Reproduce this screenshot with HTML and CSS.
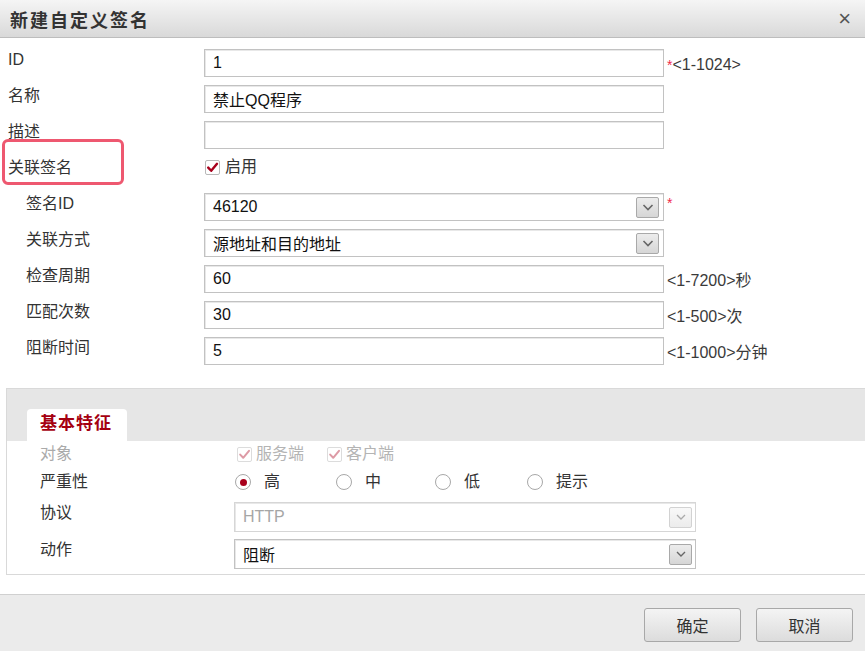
FILE: index.html
```html
<!DOCTYPE html>
<html lang="zh-CN">
<head>
  <meta charset="UTF-8" />
  <title>新建自定义签名</title>
  <link rel="stylesheet" href="styles.css">
</head>
<body>
  <div class="dialog">
    <div class="dialog-header">
      <span class="dialog-title">新建自定义签名</span>
      <span class="dialog-close">×</span>
    </div>

    <div class="form">
      <div class="form-row">
        <label class="form-label">ID</label>
        <input class="text-input" type="text" value="1" />
        <span class="hint"><span class="req">*</span>&lt;1-1024&gt;</span>
      </div>
      <div class="form-row">
        <label class="form-label">名称</label>
        <input class="text-input" type="text" value="禁止QQ程序" />
      </div>
      <div class="form-row">
        <label class="form-label">描述</label>
        <input class="text-input" type="text" value="" />
      </div>
      <div class="form-row">
        <label class="form-label">关联签名</label>
        <span class="check">
          <span class="check-box">
            <svg width="13" height="13" viewBox="0 0 13 13"><path d="M2.2 6.6 L5.2 9.8 L11 2.8" fill="none" stroke="#a8001c" stroke-width="2.4" stroke-linecap="round" stroke-linejoin="round"/></svg>
          </span>
          启用
        </span>
        <div class="mark"></div>
      </div>
      <div class="form-row sub">
        <label class="form-label">签名ID</label>
        <div class="select">
          <span class="select-text">46120</span>
          <span class="select-btn">
            <svg width="20" height="18" viewBox="0 0 20 18"><path d="M5.5 7 L10 11.5 L14.5 7" fill="none" stroke="#666" stroke-width="1.6"/></svg>
          </span>
        </div>
        <span class="hint req star">*</span>
      </div>
      <div class="form-row sub">
        <label class="form-label">关联方式</label>
        <div class="select">
          <span class="select-text">源地址和目的地址</span>
          <span class="select-btn">
            <svg width="20" height="18" viewBox="0 0 20 18"><path d="M5.5 7 L10 11.5 L14.5 7" fill="none" stroke="#666" stroke-width="1.6"/></svg>
          </span>
        </div>
      </div>
      <div class="form-row sub">
        <label class="form-label">检查周期</label>
        <input class="text-input" type="text" value="60" />
        <span class="hint">&lt;1-7200&gt;秒</span>
      </div>
      <div class="form-row sub">
        <label class="form-label">匹配次数</label>
        <input class="text-input" type="text" value="30" />
        <span class="hint">&lt;1-500&gt;次</span>
      </div>
      <div class="form-row sub">
        <label class="form-label">阻断时间</label>
        <input class="text-input" type="text" value="5" />
        <span class="hint">&lt;1-1000&gt;分钟</span>
      </div>
    </div>

    <div class="panel">
      <div class="panel-tabs">
        <span class="tab active">基本特征</span>
      </div>
      <div class="panel-body">
        <div class="prow">
          <label class="plabel disabled">对象</label>
          <span class="check disabled">
            <span class="check-box">
              <svg width="13" height="13" viewBox="0 0 13 13"><path d="M2.2 6.6 L5.2 9.8 L11 2.8" fill="none" stroke="#dd9aa5" stroke-width="2" stroke-linecap="round" stroke-linejoin="round"/></svg>
            </span>
            服务端
          </span>
          <span class="check disabled">
            <span class="check-box">
              <svg width="13" height="13" viewBox="0 0 13 13"><path d="M2.2 6.6 L5.2 9.8 L11 2.8" fill="none" stroke="#dd9aa5" stroke-width="2" stroke-linecap="round" stroke-linejoin="round"/></svg>
            </span>
            客户端
          </span>
        </div>
        <div class="prow radios">
          <label class="plabel">严重性</label>
          <div class="radio-group">
            <span class="radio checked"><span class="radio-dot"></span>高</span>
            <span class="radio"><span class="radio-dot"></span>中</span>
            <span class="radio"><span class="radio-dot"></span>低</span>
            <span class="radio"><span class="radio-dot"></span>提示</span>
          </div>
        </div>
        <div class="prow pselect">
          <label class="plabel">协议</label>
          <div class="select wide disabled">
            <span class="select-text">HTTP</span>
            <span class="select-btn">
              <svg width="20" height="18" viewBox="0 0 20 18"><path d="M6 7 L10 11 L14 7" fill="none" stroke="#aaa" stroke-width="1.3"/></svg>
            </span>
          </div>
        </div>
        <div class="prow pselect">
          <label class="plabel">动作</label>
          <div class="select wide">
            <span class="select-text">阻断</span>
            <span class="select-btn">
              <svg width="20" height="18" viewBox="0 0 20 18"><path d="M6 7 L10 11 L14 7" fill="none" stroke="#666" stroke-width="1.4"/></svg>
            </span>
          </div>
        </div>
      </div>
    </div>

    <div class="dialog-footer">
      <button class="btn">确定</button>
      <button class="btn">取消</button>
    </div>
  </div>
</body>
</html>
```

FILE: styles.css
```css
* {
  box-sizing: border-box;
}

body {
  margin: 0;
  font-family: "Liberation Sans", "Noto Sans CJK SC", sans-serif;
  color: #333;
  background: #fff;
}

.dialog {
  width: 865px;
  height: 651px;
  overflow: hidden;
  display: flex;
  flex-direction: column;
  background: #fff;
}

/* header */
.dialog-header {
  flex: none;
  height: 38px;
  display: flex;
  align-items: center;
  justify-content: space-between;
  padding: 0 14px 0 10px;
  background: linear-gradient(#f5f5f5, #d9d9d9);
  border-bottom: 1px solid #bdbdbd;
}

.dialog-title {
  font-size: 18px;
  font-weight: bold;
  letter-spacing: 2px;
  color: #333;
}

.dialog-close {
  font-size: 22px;
  line-height: 22px;
  color: #555;
}

/* top form */
.form {
  padding-top: 11px;
  display: flex;
  flex-direction: column;
  gap: 8px;
}

.form-row {
  position: relative;
  display: flex;
  align-items: flex-start;
  height: 28px;
}

.form-label {
  flex: none;
  width: 204px;
  padding-left: 8px;
  font-size: 16px;
  line-height: 21px;
  color: #333;
}

.form-row.sub .form-label {
  padding-left: 26px;
}

.text-input {
  width: 460px;
  height: 28px;
  padding: 0 8px;
  border: 1px solid #c2c2c2;
  box-shadow: inset 1px 1px 0 #e8e8e8;
  font-family: "Liberation Sans", "Noto Sans CJK SC", sans-serif;
  font-size: 16px;
  color: #111;
  background: #fff;
  outline: none;
}

.hint {
  margin-left: 3px;
  font-size: 16px;
  line-height: 31px;
  color: #3a3a3a;
}

.req {
  color: #f0284a;
  font-size: 14px;
}

.star {
  line-height: 20px;
}

/* checkbox */
.check {
  display: inline-flex;
  align-items: center;
  font-size: 16px;
  line-height: 20px;
  color: #333;
}

.check-box {
  width: 15px;
  height: 15px;
  margin: 0 5px 0 1px;
  border: 1px solid #b9b9b9;
  border-radius: 2px;
  background: #fff;
  display: inline-flex;
  align-items: center;
  justify-content: center;
}

.check.disabled {
  color: #b4b4b4;
  margin-right: 20px;
}

.check.disabled .check-box {
  border-color: #dcdcdc;
  margin-left: 3px;
  margin-right: 4px;
}

/* red annotation */
.mark {
  position: absolute;
  left: 2px;
  top: -18px;
  width: 122px;
  height: 46px;
  border: 3px solid #ee5870;
  border-radius: 6px;
}

/* select */
.select {
  width: 460px;
  height: 28px;
  display: flex;
  align-items: center;
  justify-content: space-between;
  padding: 0 4px 0 8px;
  border: 1px solid #c2c2c2;
  box-shadow: inset 1px 1px 0 #e8e8e8;
  background: #fff;
  font-size: 16px;
  color: #111;
}

.select-btn {
  width: 23px;
  height: 21px;
  display: flex;
  align-items: center;
  justify-content: center;
  border: 1px solid #a9a9a9;
  border-radius: 2px;
  background: linear-gradient(#ececec, #d6d6d6);
}

.select.wide {
  width: 462px;
  height: 30px;
  padding-right: 3px;
}

.select.disabled {
  color: #a6a6a6;
  border-color: #d6d6d6;
}

.select.disabled .select-btn {
  border-color: #d2d2d2;
  background: linear-gradient(#f8f8f8, #ececec);
}

/* panel */
.panel {
  margin: 23px -2px 0 6px;
  border: 1px solid #d9d9d9;
}

.panel-tabs {
  height: 52px;
  padding: 20px 0 0 20px;
  background: #e6e6e6;
  display: flex;
  align-items: flex-end;
}

.tab {
  width: 100px;
  height: 32px;
  padding-left: 13px;
  background: #fff;
  border-radius: 4px 4px 0 0;
  font-size: 17px;
  font-weight: bold;
  letter-spacing: 1px;
  line-height: 30px;
  color: #a50010;
}

.panel-body {
  padding-bottom: 5px;
}

.prow {
  display: flex;
  align-items: center;
  height: 26px;
}

.prow.radios {
  height: 30px;
}

.prow.pselect {
  align-items: flex-start;
  height: 30px;
  margin-top: 5px;
}

.prow.pselect + .prow.pselect {
  margin-top: 7px;
}

.plabel {
  flex: none;
  width: 227px;
  padding-left: 33px;
  font-size: 16px;
  line-height: 22px;
  color: #333;
}

.plabel.disabled {
  color: #aaa;
}

/* radios */
.radio-group {
  display: grid;
  grid-template-columns: 101px 99px 92px auto;
  padding-left: 1px;
}

.radio {
  display: inline-flex;
  align-items: center;
  font-size: 16px;
  line-height: 22px;
  color: #333;
}

.radio-dot {
  width: 16px;
  height: 16px;
  margin-right: 13px;
  border: 1px solid #a8a8a8;
  border-radius: 50%;
  background: #fff;
  display: inline-flex;
  align-items: center;
  justify-content: center;
}

.radio.checked .radio-dot::after {
  content: "";
  width: 7px;
  height: 7px;
  border-radius: 50%;
  background: #a8001c;
}

/* footer */
.dialog-footer {
  flex: none;
  margin-top: auto;
  height: 57px;
  display: flex;
  justify-content: flex-end;
  align-items: flex-start;
  gap: 15px;
  padding: 13px 12px 0 0;
  background: #ebebeb;
  border-top: 1px solid #d0d0d0;
}

.btn {
  width: 97px;
  height: 34px;
  border: 1px solid #a8a8a8;
  border-radius: 3px;
  background: linear-gradient(#f4f4f4, #dcdcdc);
  font-family: "Liberation Sans", "Noto Sans CJK SC", sans-serif;
  font-size: 16px;
  color: #333;
  cursor: pointer;
}
```
